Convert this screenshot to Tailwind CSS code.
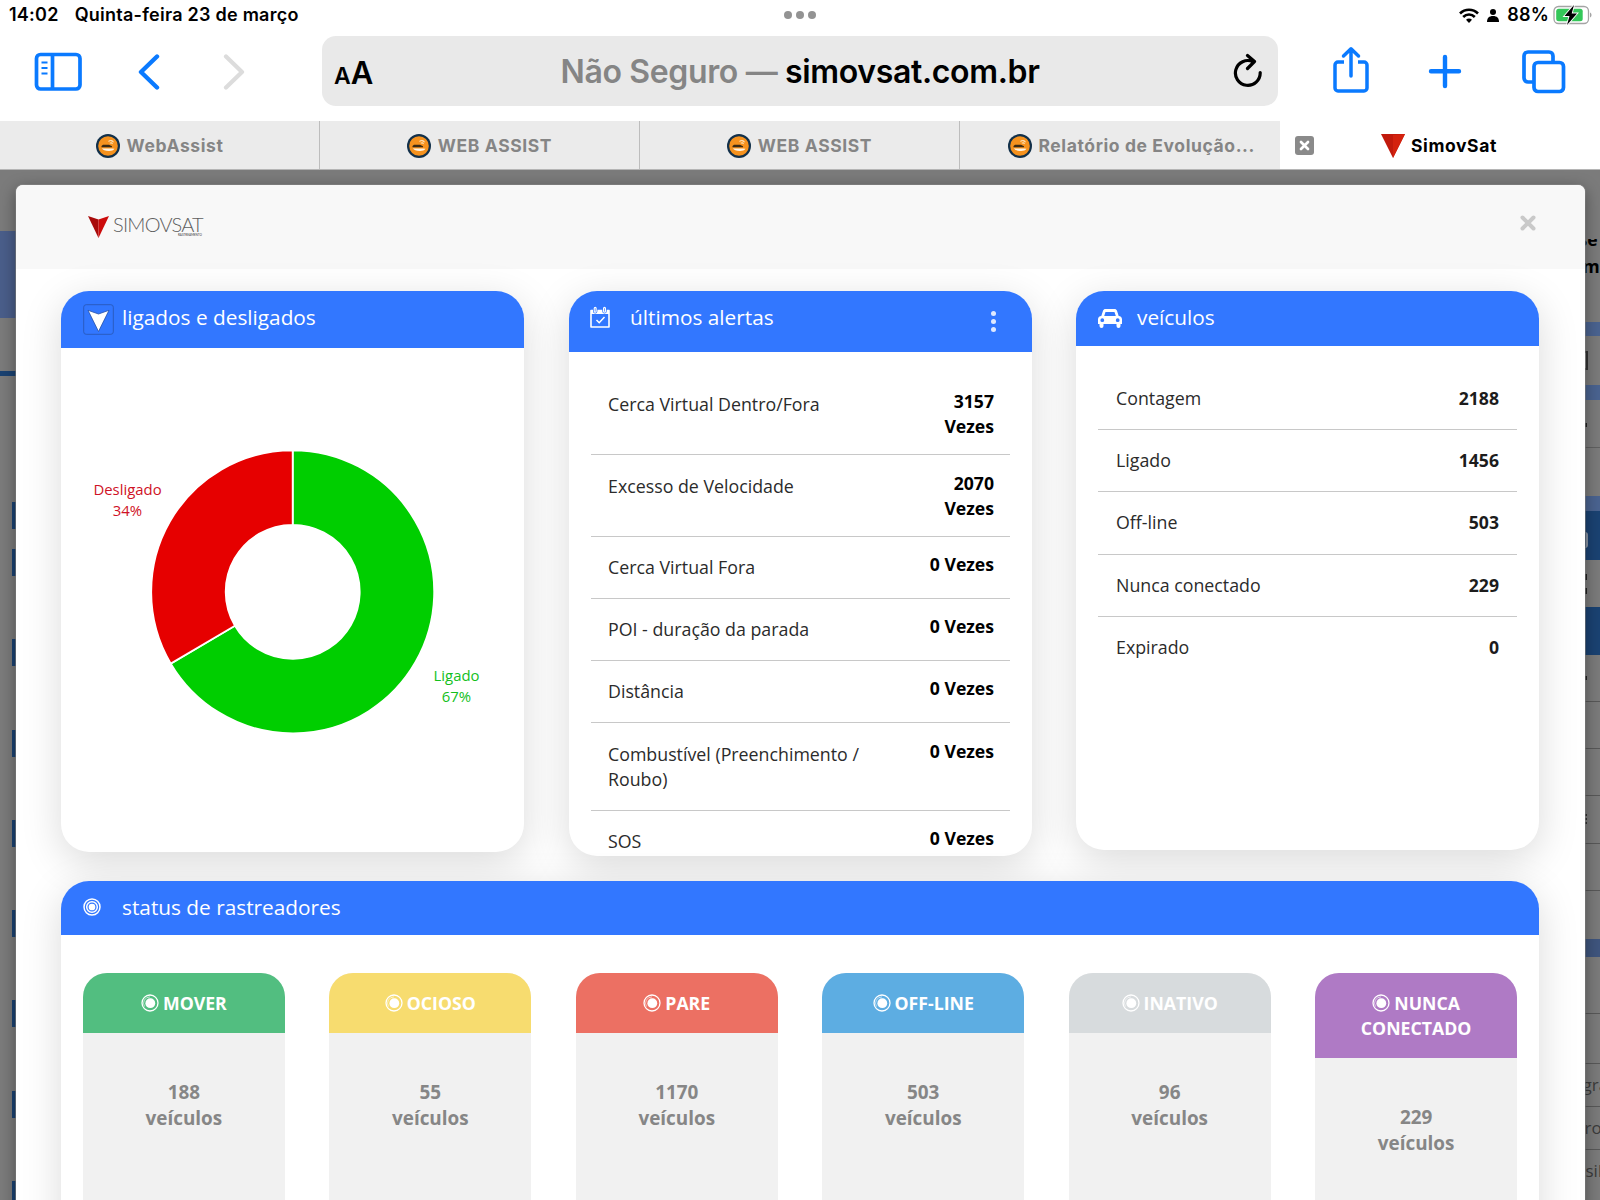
<!DOCTYPE html>
<html lang="pt-BR">
<head>
<meta charset="utf-8">
<title>SimovSat</title>
<script src="https://cdn.jsdelivr.net/npm/@tailwindcss/browser@4"></script>
</head>
<body class="w-[1600px] h-[1200px] overflow-hidden bg-[#7b7b7b] font-['Open_Sans',sans-serif] flex flex-col">
<svg width="0" height="0" class="hidden">
  <symbol id="fav" viewBox="0 0 24 24">
    <circle cx="12" cy="12" r="12" fill="#12304a"/><circle cx="12" cy="12" r="9.800" fill="#f6921e"/>
    <path d="M5.500 12l1.500-1.200h6l2 1 1 .4v1H5.500z" fill="#3b2a14"/>
    <path d="M6 14.300c4 .6 7-.2 12.500.5-1 1.900-3.500 2.200-6 2.100-3.500-.1-5.500-.6-6.500-2.600z" fill="#fdf3e2"/>
    <path d="M12.500 7.500c1.800-1.500 3.800-1.200 5 .8M13.800 9.300c1.200-.8 2.100-.6 2.700.6" stroke="#fde0b4" stroke-width="1.100" fill="none"/>
  </symbol>
  <symbol id="bull" viewBox="0 0 18 18">
    <circle cx="9" cy="9" r="8" fill="none" stroke="#fff" stroke-width="1.300"/><path d="M3.500 12.500A6.300 6.300 0 0 1 9 2.900" fill="none" stroke="#fff" stroke-opacity=".6" stroke-width="1"/><circle cx="9.300" cy="9.200" r="4.900" fill="#fff"/>
  </symbol>
</svg>

<!-- status bar -->
<header class="shrink-0 h-[121px] bg-white font-['Inter',sans-serif] flex flex-col">
  <div class="h-[30px] flex items-center text-[18px] font-semibold leading-none tracking-[0.25px] text-black pl-[9px] pr-[7px]">
    <div class="w-[775px] flex gap-4 whitespace-nowrap"><span>14:02</span><span>Quinta-feira 23 de março</span></div>
    <div class="flex gap-1 w-8"><i class="size-2 rounded-full bg-[#939393]"></i><i class="size-2 rounded-full bg-[#939393]"></i><i class="size-2 rounded-full bg-[#939393]"></i></div>
    <div class="ml-auto flex items-center">
      <svg width="20" height="15" viewBox="0 0 20 15" fill="none" stroke="#000" stroke-width="2.600"><path d="M1 5.500C6 .4 14 .4 19 5.500M4.200 9c3.300-3.300 8.300-3.300 11.600 0"/><path d="M10 15l-3-3.200c1.700-1.600 4.300-1.600 6 0z" fill="#000" stroke="none"/></svg>
      <svg class="ml-2" width="12" height="13" viewBox="0 0 12 13"><circle cx="6" cy="3" r="3"/><path d="M0 13c0-4 2-6 6-6s6 2 6 6z"/></svg>
      <span class="ml-2">88%</span>
      <svg class="ml-1" width="40" height="20" viewBox="0 0 40 20"><rect x="1" y="1.500" width="34.500" height="17" rx="4.500" fill="none" stroke="#a4a4a4" stroke-width="1.300"/><rect x="3.200" y="3.800" width="26.500" height="12.400" rx="2.500" fill="#34c759"/><path d="M37 7.500c2 .8 2 4.200 0 5z" fill="#a4a4a4"/><path d="M21 0L11.500 11h5L14 20l10-11.500h-5.300z" stroke="#fff" stroke-width="1.800" paint-order="stroke"/></svg>
    </div>
  </div>
  <!-- toolbar -->
  <div class="flex-1 flex items-start pt-[6px] pl-[34px]">
    <svg class="mt-4" width="48" height="40" viewBox="0 0 48 40" fill="none" stroke="#0a7aff" stroke-width="3.700"><rect x="2.500" y="2.500" width="43.500" height="34.500" rx="4"/><path d="M18.500 3v34"/><path d="M7.500 10.500h6M7.500 16h6M7.500 21.500h6" stroke-width="2"/></svg>
    <svg class="ml-[56px] mt-[18px]" width="22" height="36" viewBox="0 0 22 36" fill="none" stroke="#0a7aff" stroke-width="4.400" stroke-linecap="round" stroke-linejoin="round"><path d="M19 2.500L3 18l16 15.500"/></svg>
    <svg class="ml-[63px] mt-[18px]" width="22" height="36" viewBox="0 0 22 36" fill="none" stroke="#dcdcdc" stroke-width="4.200" stroke-linecap="round" stroke-linejoin="round"><path d="M3 2.500L19 18 3 33.500"/></svg>
    <div class="ml-[77px] w-[956px] h-[70px] rounded-[14px] bg-[#e9e9e9] flex items-center justify-between pl-3 pr-[15px]">
      <div class="w-[33px] pt-0.5 flex items-baseline font-semibold leading-none"><span class="text-[23px]">A</span><span class="text-[31px]">A</span></div>
      <div class="text-[32px] pt-0.5 font-semibold tracking-[-0.35px] text-[#858585] whitespace-nowrap">Não Seguro — <span class="text-black">simovsat.com.br</span></div>
      <svg width="30" height="36" viewBox="0 0 30 36" fill="none" stroke="#000" stroke-width="3.200" stroke-linecap="round" stroke-linejoin="round"><path d="M27.200 19.500A12.400 12.400 0 1 1 20 8.700M14.500 2.500l7 6-7 7"/></svg>
    </div>
    <svg class="ml-[54px] mt-2.5" width="38" height="48" viewBox="0 0 38 48" fill="none" stroke="#0a7aff" stroke-width="3.500" stroke-linecap="round" stroke-linejoin="round"><path d="M12 16H6a3 3 0 0 0-3 3v23a3 3 0 0 0 3 3h26a3 3 0 0 0 3-3V19a3 3 0 0 0-3-3h-6" stroke-linecap="butt"/><path d="M19 30V3M11.500 10L19 2.800 26.500 10"/></svg>
    <svg class="ml-[58px] mt-[18px]" width="34" height="35" viewBox="0 0 34 35" fill="none" stroke="#0a7aff" stroke-width="4.400" stroke-linecap="round"><path d="M17 3v29M3 17.300h28"/></svg>
    <svg class="ml-[60px] mt-[14px]" width="44" height="44" viewBox="0 0 44 44" fill="none" stroke="#0a7aff" stroke-width="3.700"><rect x="12" y="12.500" width="29.500" height="29" rx="4"/><path d="M31 12V6a4 4 0 0 0-4-4H6a4 4 0 0 0-4 4v22a4 4 0 0 0 4 4h5"/></svg>
  </div>
</header>
<!-- tabs -->
<nav class="shrink-0 h-[49px] grid grid-cols-5 bg-[#ebebeb] border-b border-[#b5b5b5] font-['Inter',sans-serif] font-bold text-[17.500px] tracking-[0.6px] text-[#858585] whitespace-nowrap">
  <div class="border-r border-[#bdbdbd] flex items-center justify-center gap-[7px]"><svg class="size-6 mt-px"><use href="#fav"/></svg><span class="pt-0.5">WebAssist</span></div>
  <div class="border-r border-[#bdbdbd] flex items-center justify-center gap-[7px]"><svg class="size-6 mt-px"><use href="#fav"/></svg><span class="pt-0.5">WEB ASSIST</span></div>
  <div class="border-r border-[#bdbdbd] flex items-center justify-center gap-[7px]"><svg class="size-6 mt-px"><use href="#fav"/></svg><span class="pt-0.5">WEB ASSIST</span></div>
  <div class="flex items-center justify-end pr-[25px] gap-[6px]"><svg class="size-6 mt-px"><use href="#fav"/></svg><span class="pt-0.5">Relatório de Evolução...</span></div>
  <div class="bg-white text-black flex items-center pl-[15px]">
    <svg class="mt-px" width="19" height="19" viewBox="0 0 19 19"><rect width="19" height="19" rx="3" fill="#8a8a8a"/><path d="M6 6l7 7M13 6l-7 7" stroke="#fff" stroke-width="2.700" stroke-linecap="round"/></svg>
    <svg class="ml-[67px] mr-1.5 mt-px" width="24" height="24" viewBox="0 0 24 24"><path d="M0 0h24L12 24z" fill="#c11a0c"/><path d="M12 1l12-1-12 24z" fill="#d4220e"/></svg><span class="pt-0.5">SimovSat</span>
  </div>
</nav>

<main class="flex-1 min-h-0 flex pt-[15px] overflow-hidden">
  <!-- page behind, left edge -->
  <div class="w-4 shrink-0 flex flex-col">
    <div class="h-[46px] shrink-0"></div><div class="h-[87px] shrink-0 bg-[#4a5e8a]"></div>
    <div class="h-[53px] shrink-0"></div><div class="h-[5px] shrink-0 bg-[#1a4272]"></div>
    <div class="h-[126px] shrink-0"></div><div class="h-[27px] w-1 shrink-0 self-end bg-[#1a4272]"></div>
    <div class="mt-5 flex flex-col gap-[63.300px] items-end">
      <i class="w-1 h-[27px] bg-[#1a4272]"></i><i class="w-1 h-[27px] bg-[#1a4272]"></i><i class="w-1 h-[27px] bg-[#1a4272]"></i><i class="w-1 h-[27px] bg-[#1a4272]"></i><i class="w-1 h-[27px] bg-[#1a4272]"></i><i class="w-1 h-[27px] bg-[#1a4272]"></i><i class="w-1 h-[27px] bg-[#1a4272]"></i><i class="w-1 h-[27px] bg-[#1a4272]"></i>
    </div>
  </div>

  <!-- modal -->
  <section class="relative z-10 w-[1568.500px] h-[1100px] shrink-0 rounded-t-[7px] bg-white shadow-[0_4px_16px_rgba(0,0,0,0.4),0_0_0_1px_rgba(150,150,150,0.6)]">
    <div class="h-[84px] rounded-t-[7px] bg-[#f8f8f8] flex items-start justify-between pl-[72px] pr-[49px] pt-[31px]">
      <div class="flex items-start">
        <svg width="21" height="22" viewBox="0 0 21 22"><path d="M0 0l10.500 3.500V22z" fill="#a80b0b"/><path d="M21 0L10.500 3.500V22z" fill="#cc0b0b"/></svg>
        <div class="ml-1 flex flex-col items-end">
          <span class="font-['Lato',sans-serif] font-light text-[20px] leading-[17px] tracking-[-0.8px] text-[#5f5f5f]">SIMOVSAT</span>
          <span class="font-['Lato',sans-serif] text-[3px] leading-[4px] mr-px text-[#333]">RASTREAMENTO</span>
        </div>
      </div>
      <svg class="-mt-px" width="16" height="16" viewBox="0 0 16 16" stroke="#c9c9c9" stroke-width="4" stroke-linecap="round"><path d="M2.500 2.500l11 11M13.500 2.500l-11 11"/></svg>
    </div>

    <div class="pl-[45px] pr-[45.500px] pt-[22px] flex flex-col">
      <div class="h-[590px] grid grid-cols-3 gap-[44.500px] items-start">
        <!-- on / off -->
        <article class="h-[560.500px] rounded-[28px] bg-white overflow-hidden shadow-[0_10px_40px_rgba(0,0,0,0.15)]">
          <div class="h-[57px] bg-[#3277ff] text-white text-[20.800px] leading-[28px] flex items-start pt-[13px] pl-[22px]">
            <svg width="31" height="31" viewBox="0 0 31 31"><rect x=".7" y=".7" width="29.600" height="29.600" rx="2.500" fill="none" stroke="#2a5cc0"/><path d="M5 6.300L15.500 10 26 6.300 15.500 27.500z" fill="#fff" stroke="#2450a8" stroke-width=".8"/></svg>
            <h2 class="ml-[8px] -mt-px">ligados e desligados</h2>
          </div>
          <svg width="463" height="500" viewBox="61 348 463 500" class="font-['Open_Sans',sans-serif] text-[14.900px]" text-anchor="middle">
            <g stroke="#fff" stroke-width="1.800">
              <path d="M292.700 450.300A141.500 141.500 0 1 1 170.780 663.620L234.970 625.800A67 67 0 1 0 292.700 524.800Z" fill="#00ce00"/>
              <path d="M292.700 450.300A141.500 141.500 0 0 0 170.780 663.620L234.970 625.800A67 67 0 0 1 292.700 524.800Z" fill="#e60000"/>
            </g>
            <g fill="#cf1226"><text x="127.500" y="494.500">Desligado</text><text x="127.500" y="515.500">34%</text></g>
            <g fill="#14bf1c"><text x="456.500" y="681">Ligado</text><text x="456.500" y="702">67%</text></g>
          </svg>
        </article>

        <!-- alerts -->
        <article class="h-[564.500px] rounded-[28px] bg-white overflow-hidden shadow-[0_10px_40px_rgba(0,0,0,0.15)]">
          <div class="h-[61px] bg-[#3277ff] text-white text-[20.800px] leading-[28px] flex items-start pt-[13px] pl-[21.500px]">
            <svg class="mt-0.5" width="20" height="22" viewBox="0 0 20 22"><path d="M1 4.500h18V21H1z" fill="none" stroke="#fff" stroke-width="1.600" stroke-linejoin="round"/><path d="M1 4.500h18V8H1z" fill="#fff"/><path d="M5.200 2.300v3M14.500 2.300v3" stroke="#3277ff" stroke-width="4.400" stroke-linecap="round"/><path d="M5.200 2.300v3M14.500 2.300v3" stroke="#fff" stroke-width="3" stroke-linecap="round"/><path d="M5.200 2.600v2.600M14.500 2.600v2.600" stroke="#3277ff" stroke-width=".7" stroke-linecap="round"/><path d="M6.500 14l2.700 2.700 5.300-5.700" fill="none" stroke="#fff" stroke-width="1.500"/></svg>
            <h2 class="ml-[20px] -mt-px">últimos alertas</h2>
            <div class="ml-auto mr-[36px] mt-[7px] flex flex-col gap-[3.500px]"><i class="size-[4.500px] rounded-full bg-[#dfe9ff]"></i><i class="size-[4.500px] rounded-full bg-[#dfe9ff]"></i><i class="size-[4.500px] rounded-full bg-[#dfe9ff]"></i></div>
          </div>
          <ul class="mx-[22px] pt-[21px] text-[17.800px] leading-[25px] text-[#2b2b2b]">
            <li class="h-[82px] border-b border-[#c8c8c8] pl-[17.500px] pr-[15.500px] pt-4 flex justify-between"><span class="pt-[3px]">Cerca Virtual Dentro/Fora</span><b class="w-[72px] text-right text-black text-[17.600px]">3157 Vezes</b></li>
            <li class="h-[81.500px] border-b border-[#c8c8c8] pl-[17.500px] pr-[15.500px] pt-[15.500px] flex justify-between"><span class="pt-[3px]">Excesso de Velocidade</span><b class="w-[72px] text-right text-black text-[17.600px]">2070 Vezes</b></li>
            <li class="h-[62.200px] border-b border-[#c8c8c8] pl-[17.500px] pr-[15.500px] pt-[15px] flex justify-between"><span class="pt-[3px]">Cerca Virtual Fora</span><b class="text-right text-black text-[17.600px]">0 Vezes</b></li>
            <li class="h-[62.200px] border-b border-[#c8c8c8] pl-[17.500px] pr-[15.500px] pt-[15px] flex justify-between"><span class="pt-[3px]">POI - duração da parada</span><b class="text-right text-black text-[17.600px]">0 Vezes</b></li>
            <li class="h-[62.200px] border-b border-[#c8c8c8] pl-[17.500px] pr-[15.500px] pt-[15.500px] flex justify-between"><span class="pt-[3px]">Distância</span><b class="text-right text-black text-[17.600px]">0 Vezes</b></li>
            <li class="h-[87.700px] border-b border-[#c8c8c8] pl-[17.500px] pr-[15.500px] pt-[15.500px] flex justify-between"><span class="pt-[3px] w-[270px]">Combustível (Preenchimento / Roubo)</span><b class="text-right text-black text-[17.600px]">0 Vezes</b></li>
            <li class="h-[62.200px] pl-[17.500px] pr-[15.500px] pt-[15px] flex justify-between"><span class="pt-[3px]">SOS</span><b class="text-right text-black text-[17.600px]">0 Vezes</b></li>
          </ul>
        </article>

        <!-- vehicles -->
        <article class="h-[558.500px] rounded-[28px] bg-white overflow-hidden shadow-[0_10px_40px_rgba(0,0,0,0.15)]">
          <div class="h-[55px] bg-[#3277ff] text-white text-[20.800px] leading-[28px] flex items-start pt-[13px] pl-[22px]">
            <svg class="mt-[5px]" width="24" height="19" viewBox="0 0 24 19" fill="#fff"><path fill-rule="evenodd" d="M5 1.800C5.500.6 6.300 0 7.500 0h9c1.200 0 2 .6 2.500 1.800L20.700 7c2 .1 3.300 1.400 3.300 3.400V15h-1.500v2a2 2 0 0 1-4 0v-2h-13v2a2 2 0 0 1-4 0v-2H0v-4.600C0 8.400 1.300 7.100 3.300 7zM6.200 7h11.600l-1.200-3.700a.6.600 0 0 0-.6-.3H8c-.3 0-.5.100-.6.300zM4.300 9.300a1.900 1.900 0 1 0 0 3.800 1.900 1.900 0 0 0 0-3.800zM19.700 9.300a1.900 1.900 0 1 0 0 3.800 1.900 1.900 0 0 0 0-3.800z"/></svg>
            <h2 class="ml-[15px] -mt-px">veículos</h2>
          </div>
          <ul class="mx-[22px] pt-[22px] text-[17.800px] leading-[25px] text-[#2b2b2b]">
            <li class="h-[62.200px] border-b border-[#c8c8c8] px-[18px] pt-[18px] flex justify-between"><span>Contagem</span><b class="text-[#1c1c1c] text-[17.600px]">2188</b></li>
            <li class="h-[62.200px] border-b border-[#c8c8c8] px-[18px] pt-[18px] flex justify-between"><span>Ligado</span><b class="text-[#1c1c1c] text-[17.600px]">1456</b></li>
            <li class="h-[62.200px] border-b border-[#c8c8c8] px-[18px] pt-[18px] flex justify-between"><span>Off-line</span><b class="text-[#1c1c1c] text-[17.600px]">503</b></li>
            <li class="h-[62.200px] border-b border-[#c8c8c8] px-[18px] pt-[18px] flex justify-between"><span>Nunca conectado</span><b class="text-[#1c1c1c] text-[17.600px]">229</b></li>
            <li class="h-[62.200px] px-[18px] pt-[18px] flex justify-between"><span>Expirado</span><b class="text-[#1c1c1c] text-[17.600px]">0</b></li>
          </ul>
        </article>
      </div>

      <!-- tracker status -->
      <article class="h-[420px] rounded-t-[28px] bg-white overflow-hidden shadow-[0_10px_40px_rgba(0,0,0,0.15)]">
        <div class="h-[54px] bg-[#3277ff] text-white text-[20.800px] leading-[28px] flex items-start pt-[12px] pl-[22px]">
          <svg class="mt-[5px]" width="18" height="18" viewBox="0 0 18 18" fill="none" stroke="#fff" stroke-width="1.500"><circle cx="9" cy="9" r="8"/><circle cx="9" cy="9" r="5.300"/><circle cx="9" cy="9" r="2.600" fill="#fff"/></svg>
          <h2 class="ml-[21px]">status de rastreadores</h2>
        </div>
        <div class="px-[22px] pt-[37.500px] grid grid-cols-6 gap-[44.700px] text-center font-bold text-[17.700px] leading-[25px]">
          <div class="h-[340px] rounded-t-[24px] overflow-hidden bg-[#f1f1f1] text-[#868686]"><div class="pt-[18px] pb-[17.500px] bg-[#52be80] text-white flex justify-center items-center gap-1"><svg class="size-[18px]"><use href="#bull"/></svg>MOVER</div><p class="pt-[45.500px] text-[18.900px] leading-[26.500px]">188<br>veículos</p></div>
          <div class="h-[340px] rounded-t-[24px] overflow-hidden bg-[#f1f1f1] text-[#868686]"><div class="pt-[18px] pb-[17.500px] bg-[#f7dc6f] text-white flex justify-center items-center gap-1"><svg class="size-[18px]"><use href="#bull"/></svg>OCIOSO</div><p class="pt-[45.500px] text-[18.900px] leading-[26.500px]">55<br>veículos</p></div>
          <div class="h-[340px] rounded-t-[24px] overflow-hidden bg-[#f1f1f1] text-[#868686]"><div class="pt-[18px] pb-[17.500px] bg-[#ec7063] text-white flex justify-center items-center gap-1"><svg class="size-[18px]"><use href="#bull"/></svg>PARE</div><p class="pt-[45.500px] text-[18.900px] leading-[26.500px]">1170<br>veículos</p></div>
          <div class="h-[340px] rounded-t-[24px] overflow-hidden bg-[#f1f1f1] text-[#868686]"><div class="pt-[18px] pb-[17.500px] bg-[#5dade2] text-white flex justify-center items-center gap-1"><svg class="size-[18px]"><use href="#bull"/></svg>OFF-LINE</div><p class="pt-[45.500px] text-[18.900px] leading-[26.500px]">503<br>veículos</p></div>
          <div class="h-[340px] rounded-t-[24px] overflow-hidden bg-[#f1f1f1] text-[#868686]"><div class="pt-[18px] pb-[17.500px] bg-[#d7dbdd] text-white flex justify-center items-center gap-1"><svg class="size-[18px]"><use href="#bull"/></svg>INATIVO</div><p class="pt-[45.500px] text-[18.900px] leading-[26.500px]">96<br>veículos</p></div>
          <div class="h-[340px] rounded-t-[24px] overflow-hidden bg-[#f1f1f1] text-[#868686]"><div class="pt-[18px] pb-[17.500px] bg-[#af7ac5] text-white"><div class="flex justify-center items-center gap-1"><svg class="size-[18px]"><use href="#bull"/></svg>NUNCA</div>CONECTADO</div><p class="pt-[45.500px] text-[18.900px] leading-[26.500px]">229<br>veículos</p></div>
        </div>
      </article>
    </div>
  </section>

  <!-- page behind, right edge -->
  <div class="w-[15.500px] shrink-0 flex flex-col overflow-hidden text-black [&>*]:shrink-0 whitespace-nowrap">
    <div class="h-[54px]"></div>
    <div class="h-[8px] overflow-hidden flex items-end font-bold text-[17.500px] leading-[16px] -indent-1.5">se</div>
    <div class="h-[26px] mt-[6px] font-bold text-[17.500px] leading-[26px] -indent-0.5">mb</div>
    <div class="h-[42.500px]"></div>
    <div class="h-[14.500px] bg-[#4a6390]"></div>
    <div class="h-[48.500px] flex items-center"><i class="w-[3px] h-[19px] border-2 border-l-0 border-[#333]"></i></div>
    <div class="h-[15px] bg-[#4a6390]"></div>
    <div class="h-[48px] border-b border-[#606060] flex items-center"><i class="w-0.5 h-1 mt-1 bg-[#222]"></i></div>
    <div class="h-[48.500px]"></div>
    <div class="h-[15px] bg-[#4a6390]"></div>
    <div class="h-[49px] bg-[#1a4272] flex items-center"><i class="w-[3px] h-4 mt-2 border-r-2 rounded-r-full border-[#8a94a4]"></i></div>
    <div class="h-[47px] flex flex-col justify-center gap-2"><i class="w-0.5 h-1.5 bg-[#222]"></i><i class="w-0.5 h-1.5 bg-[#222]"></i></div>
    <div class="h-[48px] bg-[#1a4272]"></div>
    <div class="h-[46.500px] border-b border-[#585858] flex items-center"><i class="w-0.5 h-1 bg-[#222]"></i></div>
    <div class="h-[47.400px] border-b border-[#585858]"></div>
    <div class="h-[47.400px] border-b border-[#585858]"></div>
    <div class="h-[47.400px] border-b border-[#585858] flex flex-col justify-center gap-0.5"><i class="w-0.5 h-0.5 bg-[#333]"></i><i class="w-0.5 h-0.5 bg-[#333]"></i><i class="w-0.5 h-0.5 bg-[#333]"></i></div>
    <div class="h-[47.400px] border-b border-[#585858]"></div>
    <div class="h-[48px]"></div>
    <div class="h-[18px] bg-[#3f557e]"></div>
    <div class="h-[57px] border-b border-[#585858]"></div>
    <div class="h-[50px] border-b border-[#585858]"></div>
    <div class="h-[43px] border-b border-[#585858] text-[17px] leading-[42px] text-[#3c3c3c] -indent-0.5">gra</div>
    <div class="h-[43px] border-b border-[#585858] text-[17px] leading-[42px] text-[#3c3c3c]">ro</div>
    <div class="h-[51px] text-[17px] leading-[42px] text-[#3c3c3c] pl-px">sil</div>
  </div>
</main>
</body>
</html>
